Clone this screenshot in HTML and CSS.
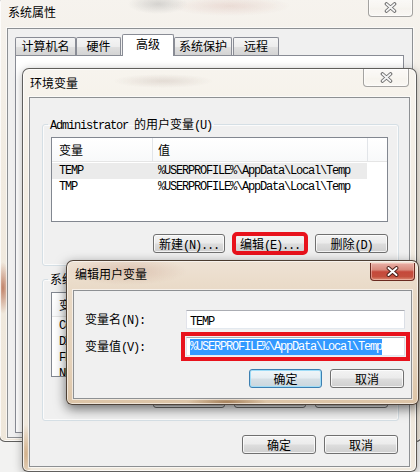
FILE: index.html
```html
<!DOCTYPE html>
<html lang="zh-CN">
<head>
<meta charset="utf-8">
<title>环境变量</title>
<link rel="stylesheet" href="styles.css">
</head>
<body>
<div class="desk">

  <section class="win win-sys">
    <header class="tbar">
      <span class="ttl">系统属性</span>
      <span class="cls cls-off">
        <svg width="13" height="11" viewBox="0 0 13 11"><path d="M2.5 2L10.5 9M10.5 2L2.5 9" stroke="#6b6b6b" stroke-width="3.6" stroke-linecap="round"/><path d="M2.5 2L10.5 9M10.5 2L2.5 9" stroke="#f4f4f4" stroke-width="1.7" stroke-linecap="round"/></svg>
      </span>
    </header>
    <div class="client sys-client">
      <nav class="tabs">
        <span class="tab t1">计算机名</span>
        <span class="tab t2">硬件</span>
        <span class="tab t3 sel">高级</span>
        <span class="tab t4">系统保护</span>
        <span class="tab t5">远程</span>
      </nav>
      <div class="tabpanel"></div>
    </div>
  </section>

  <section class="win win-env">
    <header class="tbar">
      <span class="ttl">环境变量</span>
      <span class="cls cls-off">
        <svg width="13" height="11" viewBox="0 0 13 11"><path d="M2.5 2L10.5 9M10.5 2L2.5 9" stroke="#6b6b6b" stroke-width="3.6" stroke-linecap="round"/><path d="M2.5 2L10.5 9M10.5 2L2.5 9" stroke="#f4f4f4" stroke-width="1.7" stroke-linecap="round"/></svg>
      </span>
    </header>
    <div class="client env-client">
      <fieldset class="grp">
        <legend><span class="en">Administrator </span>的用户变量<span class="en">(U)</span></legend>
        <div class="lv">
          <div class="lv-head"><span class="c1">变量</span><span class="c2">值</span><span class="c3"></span></div>
          <div class="lv-row sel"><span class="c1 en">TEMP</span><span class="c2 en">%USERPROFILE%\AppData\Local\Temp</span></div>
          <div class="lv-row"><span class="c1 en">TMP</span><span class="c2 en">%USERPROFILE%\AppData\Local\Temp</span></div>
        </div>
        <div class="btnrow">
          <button class="btn">新建<span class="en">(N)...</span></button>
          <button class="btn mark">编辑<span class="en">(E)...</span></button>
          <button class="btn wide">删除<span class="en">(D)</span></button>
        </div>
      </fieldset>

      <fieldset class="grp grp-sys">
        <legend>系统变量<span class="en">(S)</span></legend>
        <div class="lv">
          <div class="lv-head"><span class="c1">变量</span><span class="c2"></span><span class="c3"></span></div>
          <div class="lv-row"><span class="c1 en">ComSpec</span><span class="c2"></span></div>
          <div class="lv-row"><span class="c1 en">DXSDK_DIR</span><span class="c2"></span></div>
          <div class="lv-row"><span class="c1 en">FP_NO_HOST_CHECK</span><span class="c2"></span></div>
          <div class="lv-row"><span class="c1 en">NUMBER_OF_PROCESSORS</span><span class="c2"></span></div>
        </div>
        <div class="btnrow">
          <button class="btn" aria-label="新建"></button>
          <button class="btn" aria-label="编辑"></button>
          <button class="btn wide" aria-label="删除"></button>
        </div>
      </fieldset>

      <div class="dlgbtns">
        <button class="btn b74">确定</button>
        <button class="btn b74">取消</button>
      </div>
    </div>
  </section>

  <section class="win win-edit">
    <header class="tbar">
      <span class="ttl">编辑用户变量</span>
      <span class="cls cls-on">
        <svg width="13" height="11" viewBox="0 0 13 11"><path d="M2.5 2L10.5 9M10.5 2L2.5 9" stroke="#4a2019" stroke-width="3.8" stroke-linecap="round"/><path d="M2.5 2L10.5 9M10.5 2L2.5 9" stroke="#ffffff" stroke-width="1.9" stroke-linecap="round"/></svg>
      </span>
    </header>
    <div class="client edit-client">
      <div class="form">
        <label class="lbl">变量名<span class="en">(N):</span></label>
        <div class="tb"><span class="en">TEMP</span></div>
        <label class="lbl">变量值<span class="en">(V):</span></label>
        <div class="tb mark-field"><span class="en hl">%USERPROFILE%\AppData\Local\Temp</span></div>
      </div>
      <div class="dlgbtns edit-btns">
        <button class="btn btn-def b73">确定</button>
        <button class="btn b74">取消</button>
      </div>
    </div>
  </section>

</div>
</body>
</html>
```

FILE: styles.css
```css
* { box-sizing: border-box; }
html, body { margin: 0; padding: 0; }
body {
  width: 420px;
  height: 472px;
  overflow: hidden;
  background: #f2f2f1;
  font-family: "Noto Sans CJK SC", "Noto Sans", sans-serif;
  font-size: 12px;
  line-height: 14px;
  color: #000;
}
.desk { position: relative; width: 420px; height: 472px; overflow: hidden; }

.en {
  font-family: "Liberation Mono", "DejaVu Sans Mono", monospace;
  font-size: 12px;
  letter-spacing: -1.2px;
}

/* ---------- windows ---------- */
.win {
  position: absolute;
  display: flex;
  flex-direction: column;
  border: 1px solid rgba(58, 58, 58, 0.8);
  border-radius: 7px 7px 6px 6px;
}
.win-sys {
  left: -1px; top: -5px; width: 423px; height: 447px;
  background:
    radial-gradient(ellipse 7px 26px at 3px 292px, rgba(176, 96, 66, 0.75), rgba(176, 96, 66, 0) 100%),
    radial-gradient(ellipse 30px 10px at 158px 8px, rgba(150, 150, 150, 0.35), rgba(150, 150, 150, 0) 100%),
    radial-gradient(ellipse 60px 10px at 230px 10px, rgba(200, 150, 140, 0.25), rgba(200, 150, 140, 0) 100%),
    linear-gradient(#f6f3ee, #f1ebe1 40%, #efe7da);
  box-shadow: inset 0 0 0 1px rgba(255, 255, 255, 0.75);
}
.win-env {
  left: 22px; top: 68px; width: 395px; height: 404px;
  background:
    radial-gradient(ellipse 6px 30px at 3px 385px, rgba(196, 150, 100, 0.7), rgba(196, 150, 100, 0) 100%),
    radial-gradient(ellipse 50px 7px at 140px 12px, rgba(170, 150, 140, 0.25), rgba(170, 150, 140, 0) 100%),
    linear-gradient(#f7f4ee, #f2ece2 30%, #efe8dc);
  box-shadow: inset 0 0 0 1px rgba(255, 255, 255, 0.75), 0 2px 10px rgba(0, 0, 0, 0.3);
}
.win-edit {
  left: 66px; top: 260px; width: 353px; height: 145px;
  border-color: rgba(52, 40, 32, 0.85);
  background:
    radial-gradient(ellipse 40px 5px at 160px 141px, rgba(150, 110, 70, 0.8), rgba(150, 110, 70, 0) 100%),
    radial-gradient(ellipse 60px 14px at 60px 10px, rgba(200, 160, 140, 0.45), rgba(200, 160, 140, 0) 100%),
    linear-gradient(#eee2d4, #e8d8c4 25%, #e4d1ba 70%, #dcc4a6);
  box-shadow: inset 0 0 0 1px rgba(255, 255, 255, 0.55), 0 4px 12px rgba(0, 0, 0, 0.55);
}

.tbar { display: flex; align-items: flex-start; flex: none; }
.ttl { flex: 1; white-space: nowrap; color: #000; }
.cls {
  flex: none;
  display: flex;
  align-items: center;
  justify-content: center;
  height: 18px;
  border: 1px solid rgba(60, 60, 60, 0.45);
  border-top: 0;
  border-radius: 0 0 4px 4px;
}
.cls-off {
  background: linear-gradient(rgba(255, 255, 255, 0.55), rgba(255, 255, 255, 0.2) 50%, rgba(255, 255, 255, 0.05) 51%, rgba(255, 255, 255, 0.4));
  box-shadow: inset 0 0 0 1px rgba(255, 255, 255, 0.6);
}
.cls-on {
  border-color: #6a2a20;
  background: linear-gradient(#e8b0a6 0%, #d88a7c 40%, #c5483a 52%, #c4503e 80%, #dc8c74 100%);
  box-shadow: inset 0 0 0 1px rgba(255, 220, 210, 0.45);
}

.win-sys .tbar { height: 32px; padding-left: 8px; }
.win-sys .ttl { padding-top: 9px; }
.win-sys .cls { width: 45px; margin-top: 3px; margin-right: 8px; }

.win-env .tbar { height: 28px; padding-left: 7px; }
.win-env .ttl { padding-top: 7px; }
.win-env .cls { width: 46px; margin-right: 7px; }

.win-edit .tbar { height: 29px; padding-left: 8px; }
.win-edit .ttl { padding-top: 6px; }
.win-edit .cls { width: 45px; margin-top: 2px; margin-right: 3px; }

.client {
  flex: 1;
  min-height: 0;
  background: #f0f0f0;
  border: 1px solid #8d9093;
  box-shadow: 0 0 0 1px rgba(255, 255, 255, 0.6);
}
.sys-client {
  margin: 0 8px 3px 7px;
  display: flex;
  flex-direction: column;
  padding: 5px 8px 4px 7px;
}
.env-client {
  margin: 0 6px 4px 6px;
  display: flex;
  flex-direction: column;
  padding: 19px 10px 0 12px;
}
.edit-client {
  margin: 0 6px 5px 6px;
  display: flex;
  flex-direction: column;
  padding: 18px 7px 0 11px;
}

/* ---------- tabs ---------- */
.tabs { display: flex; align-items: flex-end; flex: none; }
.tab {
  height: 18px;
  border: 1px solid #898c95;
  border-bottom: 0;
  border-radius: 2px 2px 0 0;
  background: linear-gradient(#f5f5f5, #ededed 50%, #e0e0e0 51%, #d4d4d4);
  text-align: center;
  line-height: 16px;
  white-space: nowrap;
}
.t1 { width: 61px; }
.t2 { width: 45px; }
.t3 { width: 52px; margin-left: 1px; }
.t4 { width: 58px; }
.t5 { width: 46px; margin-left: 1px; }
.tab.sel {
  height: 22px;
  margin-bottom: -1px;
  position: relative;
  z-index: 1;
  background: #fff;
  line-height: 18px;
}
.tabpanel { flex: 1; border: 1px solid #898c95; background: #fff; }

/* ---------- group boxes ---------- */
.grp {
  margin: 0;
  min-width: 0;
  padding: 6px 10px 12px 8px;
  border: 1px solid #d5dfe5;
  border-radius: 3px;
  box-shadow: inset 0 0 0 1px rgba(255, 255, 255, 0.7);
}
.grp legend {
  padding: 0 2px;
  margin-left: -3px;
  line-height: 14px;
  height: 14px;
  white-space: nowrap;
}
.grp-sys { margin-top: 6px; }

/* ---------- list views ---------- */
.lv {
  height: 85px;
  border: 1px solid #828790;
  background: #fff;
  overflow: hidden;
}
.lv-head {
  display: flex;
  height: 24px;
  border-bottom: 1px solid #e5e5e5;
  background: linear-gradient(#ffffff, #f8f9fa);
}
.lv-head span { line-height: 23px; border-right: 1px solid #e2e5e9; }
.lv-head .c3 { flex: 1; border-right: 0; }
.lv-row { display: flex; height: 16px; line-height: 16px; width: 315px; white-space: nowrap; }
.lv-head + .lv-row { margin-top: 1px; }
.lv-row.sel { background: #ebebeb; }
.c1 { width: 101px; flex: none; padding-left: 7px; overflow: hidden; }
.c2 { width: 215px; flex: none; padding-left: 5px; overflow: hidden; }
.lv-head .c2 { padding-left: 5px; }

/* ---------- buttons ---------- */
.btnrow { display: flex; justify-content: flex-end; gap: 9px; margin-top: 12px; }
.btn {
  width: 72px;
  height: 19px;
  padding: 0;
  border: 1px solid #707070;
  border-radius: 3px;
  background: linear-gradient(#f3f3f3, #ebebeb 48%, #dddddd 52%, #cfcfcf);
  box-shadow: inset 0 0 0 1px rgba(255, 255, 255, 0.75);
  font-family: "Noto Sans CJK SC", "Noto Sans", sans-serif;
  font-size: 12px;
  line-height: 17px;
  color: #000;
  text-align: center;
  white-space: nowrap;
}
.btn.wide { width: 73px; }
.btn.b73 { width: 73px; }
.btn.b74 { width: 74px; }
.btn-def {
  border-color: #3c7fb1;
  box-shadow: inset 0 0 0 1px #9edcf7;
  background: linear-gradient(#f0f6f9, #e5edf2 48%, #d6e0e6 52%, #cad6dd);
}
.mark { outline: 4px solid #e8121c; outline-offset: -2px; }

.dlgbtns { display: flex; justify-content: flex-end; gap: 8px; margin-top: 14px; padding-right: 1px; }
.edit-btns { margin-top: 13px; padding-right: 0; }

/* ---------- edit form ---------- */
.form {
  display: grid;
  grid-template-columns: 101px 219px;
  row-gap: 7px;
  align-items: center;
}
.lbl { white-space: nowrap; line-height: 16px; padding-top: 2px; }
.tb {
  height: 19px;
  border: 1px solid;
  border-color: #abadb3 #dbdfe6 #e3e9ef #e2e3ea;
  background: #fff;
  padding: 0 3px;
  line-height: 17px;
  white-space: nowrap;
  overflow: hidden;
}
.mark-field { outline: 4px solid #e8121c; outline-offset: 1px; overflow: visible; }
.hl {
  display: inline-block;
  height: 16px;
  line-height: 16px;
  margin-top: 1px;
  vertical-align: top;
  background: #3399ff;
  color: #fff;
}
```
